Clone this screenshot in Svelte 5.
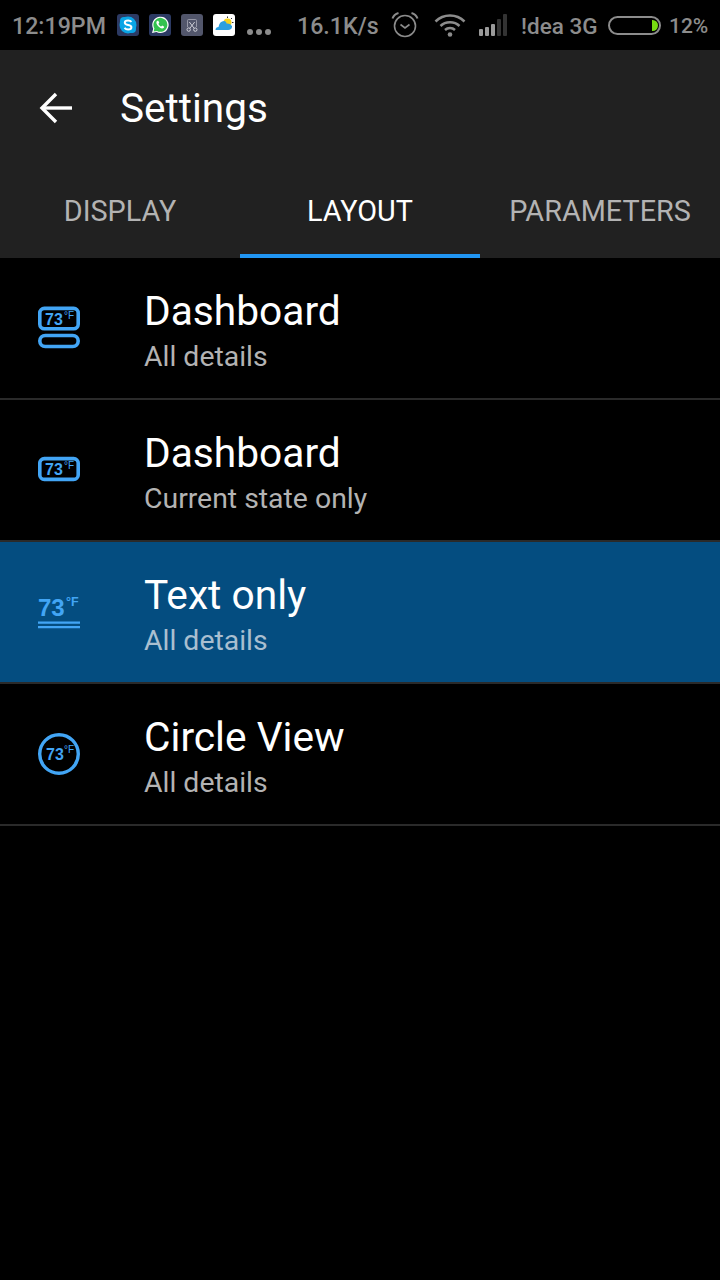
<script>
  const tabs = [
    { label: 'DISPLAY', active: false },
    { label: 'LAYOUT', active: true },
    { label: 'PARAMETERS', active: false }
  ];
  const rows = [
    { kind: 'full', title: 'Dashboard', sub: 'All details', selected: false },
    { kind: 'box', title: 'Dashboard', sub: 'Current state only', selected: false },
    { kind: 'text', title: 'Text only', sub: 'All details', selected: true },
    { kind: 'circle', title: 'Circle View', sub: 'All details', selected: false }
  ];
</script>

<div class="page">
  <div class="status">
    <span class="time">12:19PM</span>
    <div class="notifs">
      <svg class="ni" viewBox="0 0 22 22">
        <rect width="22" height="22" rx="3" fill="#2c3a63" />
        <circle cx="11" cy="11" r="8.5" fill="#0aa5e6" />
        <circle cx="7" cy="7" r="4" fill="#0aa5e6" />
        <circle cx="15" cy="15" r="4" fill="#0aa5e6" />
        <path d="M14.5 7.8c-.8-.9-2-1.3-3.4-1.3-1.9 0-3.3.9-3.3 2.3 0 3 6.6 1.6 6.6 4.4 0 1.4-1.4 2.3-3.3 2.3-1.5 0-2.8-.6-3.600-1.600" fill="none" stroke="#fff" stroke-width="2" />
      </svg>
      <svg class="ni" viewBox="0 0 22 22">
        <rect width="22" height="22" rx="3" fill="#2c3a63" />
        <path d="M3 19l1.2-4.3A8.2 8.2 0 1 1 7.400 18z" fill="#fff" />
        <path d="M4.600 17.400l.8-2.900A7 7 0 1 1 8 17z" fill="#33c24f" />
        <path d="M8.300 6.800c-1.200.9-1.200 2.400-.2 4 1 1.600 2.800 3.300 4.800 3.600 1.200.2 2.200-.6 2.300-1.700l-2-1.100-1 1c-1.200-.4-2.300-1.500-2.800-2.800l.9-1-1-2z" fill="#fff" />
      </svg>
      <svg class="ni" viewBox="0 0 22 22">
        <rect width="22" height="22" rx="3" fill="#52566b" />
        <path d="M6.500 13V6.500a1 1 0 0 1 1-1h7a1 1 0 0 1 1 1V13" fill="none" stroke="#a9abb8" stroke-width=".8" />
        <path d="M8.300 8l5 6.500M13.700 8l-5 6.500" stroke="#e8e8ee" stroke-width=".8" />
        <circle cx="7.700" cy="15.600" r="1.700" fill="#52566b" stroke="#e8e8ee" stroke-width=".8" />
        <circle cx="14.300" cy="15.600" r="1.700" fill="#52566b" stroke="#e8e8ee" stroke-width=".8" />
      </svg>
      <svg class="ni" viewBox="0 0 22 22">
        <rect width="22" height="22" rx="3" fill="#fff" />
        <circle cx="14.500" cy="8.500" r="4" fill="#f4d21f" />
        <path d="M14.500 2.500v1.500M20.500 8.500H19M19 4l-1 1M19 13l-1-1" stroke="#333" stroke-width="1" />
        <path d="M2.500 16c0-2 1.400-3 3-3 .6-4 2.800-6 5.500-6 1.500 0 2.500 1 2.500 2.500 2.500-.2 5 1 5.500 3 .2 2-1.500 3.500-4 3.500H4.500c-1.300 0-2-.2-2-0z" fill="#2b9fe0" />
      </svg>
      <span class="dots"><i></i><i></i><i></i></span>
    </div>
    <span class="speed">16.1K/s</span>
    <svg class="alarm" viewBox="0 0 28 26" fill="none" stroke="#8c8c8c" stroke-width="1.600">
      <circle cx="14" cy="14" r="10.500" />
      <path d="M9.500 12.500l4.500 3.500 4.500-3.500" />
      <path d="M1.500 6.500C2.500 3.500 4.500 1.800 7.500 1M26.500 6.500C25.500 3.500 23.500 1.800 20.500 1" stroke-width="2" />
    </svg>
    <svg class="wifi" viewBox="0 0 32 26" fill="none" stroke="#8c8c8c" stroke-width="2.500">
      <path d="M1.500 9.500C9.500 1.500 22.500 1.500 30.500 9.500" />
      <path d="M6.500 14c5-5 14-5 19 0" />
      <path d="M11 18c2.800-2.600 7.200-2.600 10 0" />
      <circle cx="16" cy="22.500" r="2.300" fill="#8c8c8c" stroke="none" />
    </svg>
    <svg class="signal" viewBox="0 0 28 22">
      <rect x="0" y="15" width="4" height="7" rx="1" fill="#9a9a9a" />
      <rect x="6" y="13" width="4" height="9" rx="1" fill="#9a9a9a" />
      <rect x="12" y="10" width="4" height="12" rx="1" fill="#9a9a9a" />
      <rect x="18" y="5" width="4" height="17" rx="1" fill="#333" />
      <rect x="24" y="0" width="4" height="22" rx="1" fill="#333" />
    </svg>
    <span class="carrier">!dea 3G</span>
    <div class="battery"><span class="charge"></span></div>
    <span class="pct">12%</span>
  </div>

  <header class="appbar">
    <div class="titlerow">
      <svg class="back" viewBox="0 0 34 32" fill="none" stroke="#fff" stroke-width="3.400">
        <path d="M33 16H3" />
        <path d="M17 2L3 16l14 14" />
      </svg>
      <h1>Settings</h1>
    </div>
    <nav class="tabs">
      {#each tabs as tab}
        <div class="tab" class:active={tab.active}>{tab.label}</div>
      {/each}
    </nav>
  </header>

  <main>
    {#each rows as row}
      <div class="row" class:selected={row.selected}>
        <div class="icon">
          {#if row.kind === 'full'}
            <svg width="44" height="44" viewBox="0 0 44 44" fill="none" stroke="#42a5f5" stroke-width="3.600">
              <rect x="2.800" y="2.400" width="38.400" height="20.400" rx="4.500" />
              <rect x="2.800" y="29.500" width="38.400" height="11" rx="5.500" />
              <text class="n" x="8" y="18.500">73</text><text class="u" x="27" y="12.500">°F</text>
            </svg>
          {:else if row.kind === 'box'}
            <svg width="44" height="28" viewBox="0 0 44 28" fill="none" stroke="#42a5f5" stroke-width="3.600">
              <rect x="2.800" y="2.600" width="38.400" height="20.800" rx="4.500" />
              <text class="n" x="8" y="19">73</text><text class="u" x="27" y="13">°F</text>
            </svg>
          {:else if row.kind === 'text'}
            <svg width="44" height="38" viewBox="0 0 44 38" fill="none">
              <text class="nb" x="1" y="23">73</text><text class="ub" x="29" y="12.500">°F</text>
              <path d="M1 29.600h42M1 34.200h42" stroke="#42a5f5" stroke-width="2.200" />
            </svg>
          {:else}
            <svg width="44" height="44" viewBox="0 0 44 44" fill="none" stroke="#42a5f5" stroke-width="3.400">
              <circle cx="22" cy="22" r="19.300" />
              <text class="n" x="9" y="27.500">73</text><text class="u" x="27" y="21">°F</text>
            </svg>
          {/if}
        </div>
        <div class="copy">
          <div class="title">{row.title}</div>
          <div class="sub">{row.sub}</div>
        </div>
      </div>
    {/each}
  </main>
</div>

<style>
  :global(body) {
    margin: 0;
    background: #000;
  }
  .page {
    width: 720px;
    height: 1280px;
    background: #000;
    font-family: Roboto, "Liberation Sans", sans-serif;
    overflow: hidden;
  }
  .status {
    height: 50px;
    display: flex;
    align-items: center;
    color: #8c8c8c;
    font-size: 23.2px;
    font-weight: 500;
    box-sizing: border-box;
    padding-left: 12px;
    white-space: nowrap;
  }
  .time {
    width: 105px;
    margin-top: 2px;
  }
  .notifs {
    display: flex;
    align-items: center;
    gap: 10px;
  }
  .ni {
    width: 22px;
    height: 22px;
    display: block;
  }
  .dots {
    display: flex;
    gap: 3px;
    margin: 14px 0 0 2px;
  }
  .dots i {
    width: 6px;
    height: 6px;
    border-radius: 50%;
    background: #8c8c8c;
  }
  .speed {
    margin-left: 26px;
    width: 94px;
    margin-top: 2px;
  }
  .alarm {
    width: 28px;
    height: 26px;
  }
  .wifi {
    width: 32px;
    height: 26px;
    margin-left: 15px;
  }
  .signal {
    width: 28px;
    height: 22px;
    margin-left: 13px;
  }
  .carrier {
    margin: 2px 0 0 14px;
    font-size: 22.5px;
    width: 87px;
  }
  .battery {
    width: 49px;
    height: 15px;
    border: 2px solid #8c8c8c;
    border-radius: 10px;
    position: relative;
  }
  .charge {
    position: absolute;
    right: 1px;
    top: 2px;
    width: 6px;
    height: 11px;
    background: #77dd11;
    border-radius: 0 6px 6px 0;
  }
  .pct {
    margin: 2px 0 0 8px;
    font-size: 21px;
  }
  .appbar {
    height: 208px;
    background: #212121;
    display: flex;
    flex-direction: column;
  }
  .titlerow {
    height: 116px;
    display: flex;
    align-items: center;
    padding-left: 39px;
  }
  .back {
    width: 34px;
    height: 32px;
    display: block;
  }
  h1 {
    margin: 0 0 0 47px;
    font-size: 40.500px;
    font-weight: 400;
    color: #fff;
  }
  .tabs {
    flex: 1;
    display: grid;
    grid-template-columns: repeat(3, 240px);
  }
  .tab {
    display: flex;
    align-items: center;
    justify-content: center;
    font-size: 28.800px;
    color: #b3b3b3;
    box-sizing: border-box;
    border-bottom: 4px solid transparent;
    padding-top: 2px;
  }
  .tab.active {
    color: #fff;
    border-bottom-color: #2196f3;
  }
  .row {
    height: 142px;
    box-sizing: border-box;
    border-bottom: 2px solid #2a2a2a;
    display: flex;
    align-items: center;
  }
  .row.selected {
    background: #044d80;
  }
  .icon {
    width: 144px;
    flex: none;
    padding-left: 37px;
    box-sizing: border-box;
    display: flex;
  }
  .icon svg {
    display: block;
  }
  .copy {
    padding-top: 6px;
  }
  .title {
    font-size: 40.700px;
    color: #fff;
    line-height: 47px;
  }
  .sub {
    font-size: 28.400px;
    color: #b3b3b3;
    line-height: 36px;
    margin-top: 4px;
  }
  .row.selected .sub {
    color: #a9bfd0;
  }
  text {
    font-family: "Liberation Sans", sans-serif;
    fill: #42a5f5;
    stroke: none;
  }
  .n {
    font-size: 16px;
    font-weight: 700;
  }
  .u {
    font-size: 10px;
  }
  .nb {
    font-size: 24px;
    font-weight: 700;
  }
  .ub {
    font-size: 12.500px;
    font-weight: 700;
  }
</style>
